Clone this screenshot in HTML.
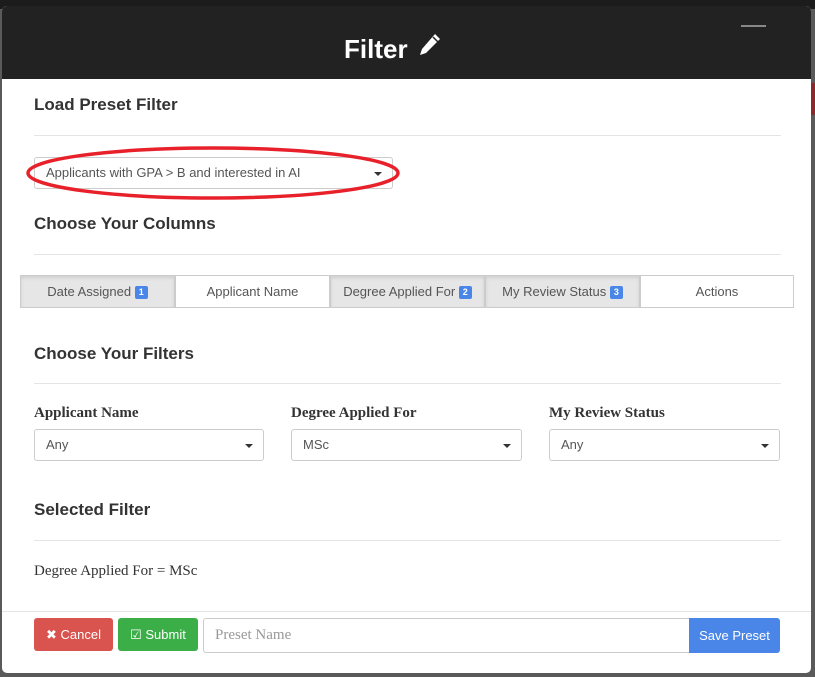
<!DOCTYPE html>
<html><head><style>
*{box-sizing:border-box;margin:0;padding:0}
body{width:815px;height:677px;background:#5a5a5a;position:relative;overflow:hidden;font-family:"Liberation Sans",sans-serif}
.a{position:absolute}
.h{font-weight:bold;font-size:17px;color:#333}
.hr{height:1px;background:#e5e5e5;left:34px;width:747px}
.sel{border:1px solid #ccc;border-radius:3px;background:#fff;font-size:13px;color:#555;padding-left:11px;line-height:30px;height:32px}
.sel:after{content:"";position:absolute;right:10px;top:14px;border:4px solid transparent;border-top:4px solid #333;border-bottom:0}
.tab{top:275px;height:33px;width:155px;border:1px solid #ccc;font-size:13px;color:#555;text-align:center;line-height:31px;background:#fff}
.tab.on{background:#e6e6e6;box-shadow:inset 0 2px 3px rgba(0,0,0,.1)}
.b{display:inline-block;background:#4a86e8;color:#fff;font-size:9px;font-weight:bold;line-height:13px;width:13px;border-radius:2px;vertical-align:1px}
.lbl{font-family:"Liberation Serif",serif;font-weight:bold;font-size:15px;color:#333;top:405px}
.btn{top:618px;height:33px;border-radius:3px;color:#fff;font-size:13px;line-height:33px;text-align:center}
</style></head><body>
<div class="a" style="left:0;top:0;width:815px;height:9px;background:#1c1c1c"></div>
<div class="a" style="left:811px;top:83px;width:4px;height:32px;background:#8b2a2a"></div>
<div class="a" style="left:2px;top:6px;width:809px;height:667px;background:#fff;border-radius:5px;overflow:hidden">
<div class="a" style="left:0;top:0;width:809px;height:73px;background:#222"></div>
</div>
<div class="a" style="left:741px;top:25px;width:25px;height:2px;background:#888"></div>
<div class="a" style="left:344px;top:32px;font-size:26px;font-weight:bold;color:#fff">Filter
<svg width="28" height="28" viewBox="0 0 28 28" style="vertical-align:-2px"><path d="M20 2l5 5-14 14-6 2 2-6z" fill="#fff"/><path d="M18 5l5 5" stroke="#222" stroke-width="1.5"/></svg></div>
<div class="a h" style="left:34px;top:95px">Load Preset Filter</div>
<div class="a hr" style="top:135px"></div>
<div class="a sel" style="left:34px;top:157px;width:359px">Applicants with GPA &gt; B and interested in AI</div>
<svg class="a" style="left:0;top:0" width="815" height="677"><ellipse cx="213" cy="173" rx="185" ry="25" fill="none" stroke="#e8202a" stroke-width="3.5"/></svg>
<div class="a h" style="left:34px;top:214px">Choose Your Columns</div>
<div class="a hr" style="top:254px"></div>
<div class="a tab on" style="left:20px">Date Assigned <span class="b">1</span></div>
<div class="a tab" style="left:175px">Applicant Name</div>
<div class="a tab on" style="left:330px">Degree Applied For <span class="b">2</span></div>
<div class="a tab on" style="left:485px">My Review Status <span class="b">3</span></div>
<div class="a tab" style="left:640px;width:154px">Actions</div>
<div class="a h" style="left:34px;top:344px">Choose Your Filters</div>
<div class="a hr" style="top:383px"></div>
<div class="a lbl" style="left:34px">Applicant Name</div>
<div class="a lbl" style="left:291px">Degree Applied For</div>
<div class="a lbl" style="left:549px">My Review Status</div>
<div class="a sel" style="left:34px;top:429px;width:230px">Any</div>
<div class="a sel" style="left:291px;top:429px;width:231px">MSc</div>
<div class="a sel" style="left:549px;top:429px;width:231px">Any</div>
<div class="a h" style="left:34px;top:500px">Selected Filter</div>
<div class="a hr" style="top:540px"></div>
<div class="a" style="left:34px;top:563px;font-family:'Liberation Serif',serif;font-size:15px;color:#333">Degree Applied For = MSc</div>
<div class="a" style="left:2px;top:611px;width:809px;height:1px;background:#e5e5e5"></div>
<div class="a btn" style="left:34px;width:79px;background:#d9534f">✖ Cancel</div>
<div class="a btn" style="left:118px;width:80px;background:#3cae48">☑ Submit</div>
<div class="a" style="left:203px;top:618px;width:487px;height:35px;border:1px solid #ccc;border-radius:3px 0 0 3px;font-family:'Liberation Serif',serif;font-size:15px;color:#999;padding-left:11px;line-height:33px">Preset Name</div>
<div class="a btn" style="left:689px;width:91px;height:35px;line-height:35px;background:#4a86e8;border-radius:0 3px 3px 0">Save Preset</div>
</body></html>
